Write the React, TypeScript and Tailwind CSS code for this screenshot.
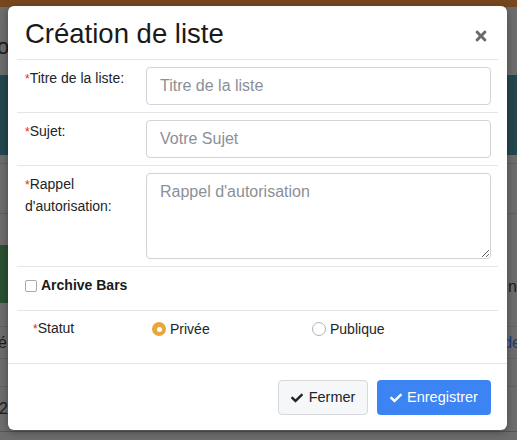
import { FaCheck, FaTimes } from 'react-icons/fa';

function Req() {
  return <span className="text-[12px] text-[#ee1c1c]">*</span>;
}

function FieldRow({ label, children, tall }: { label: React.ReactNode; children: React.ReactNode; tall?: boolean }) {
  return (
    <div className="flex border-b border-[#e6e6e6] py-[7px] pl-2 pr-[7px]">
      <label className={`w-[121px] shrink-0 pt-[1px] text-[14px] leading-[21px] text-[#212529] ${tall ? 'pr-4' : ''}`}>
        {label}
      </label>
      <div className="flex-1">{children}</div>
    </div>
  );
}

function Backdrop() {
  return (
    <div className="flex h-full flex-col bg-[#6d6d6d] text-[#1b1b1b]">
      <div className="h-[7px] bg-[#774820]" />
      <div className="h-[68px] pt-[28px] text-[22px] leading-[24px]">
        <span className="-ml-[3px]">o</span>
      </div>
      <div className="h-[80px] bg-[#23474e]" />
      <div className="h-[9px] border-b border-[#606060]" />
      <div className="h-[50px] border-b border-[#606060]" />
      <div className="h-[31px]" />
      <div className="flex h-[58px] items-start justify-between">
        <div className="h-full w-[20px] bg-[#2b5030]" />
        <div className="pt-[32px] text-[16px] leading-[20px]">n</div>
      </div>
      <div className="h-[24px] border-b border-[#626262]" />
      <div className="flex h-[32px] items-center justify-between border-b border-[#626262] text-[16px]">
        <span className="-ml-[2px]">é</span>
        <span className="-mr-[4px] text-[#1c3a7e]">de</span>
      </div>
      <div className="h-[28px] border-b border-[#626262]" />
      <div className="flex h-[45px] items-center border-b border-[#555] text-[16px]">
        <span className="-ml-[1px]">20</span>
      </div>
      <div className="flex-1" />
    </div>
  );
}

export default function App() {
  return (
    <div className="relative h-[440px] w-[517px] overflow-hidden font-['Liberation_Sans',Arial,sans-serif]">
      <Backdrop />

      <div className="absolute left-[8px] top-[6px] flex h-[424px] w-[499px] flex-col rounded-[6px] bg-white shadow-[0_2px_8px_rgba(0,0,0,0.35)]">
        <div className="px-[9px]">
          <div className="flex items-center justify-between border-b border-[#e6e6e6] pb-[9px] pl-2 pr-[9px] pt-[12px]">
            <h4 className="text-[27.5px] leading-[32px] text-[#1a1a1a]">Création de liste</h4>
            <button className="mt-[4px] text-[#6a6a6a]">
              <FaTimes size={16} />
            </button>
          </div>

          <FieldRow label={<><Req />Titre de la liste:</>}>
            <input
              placeholder="Titre de la liste"
              className="h-[38px] w-full rounded-[4px] border border-[#ced4da] px-[13px] text-[16px] text-[#495057] outline-none placeholder:text-[#8a9097]"
            />
          </FieldRow>

          <FieldRow label={<><Req />Sujet:</>}>
            <input
              placeholder="Votre Sujet"
              className="h-[38px] w-full rounded-[4px] border border-[#ced4da] px-[13px] text-[16px] text-[#495057] outline-none placeholder:text-[#8a9097]"
            />
          </FieldRow>

          <FieldRow tall label={<><Req />Rappel d'autorisation:</>}>
            <textarea
              placeholder="Rappel d'autorisation"
              className="block h-[86px] w-full rounded-[4px] border border-[#ced4da] px-[13px] py-[6px] text-[16px] leading-[24px] text-[#495057] outline-none placeholder:text-[#8a9097]"
            />
          </FieldRow>

          <div className="flex items-center gap-[4px] border-b border-[#e6e6e6] pb-[14px] pl-2 pt-[8px]">
            <span className="h-[12px] w-[12px] rounded-[2px] border border-[#a9a9a9] bg-white" />
            <span className="text-[14px] font-bold leading-[21px] text-[#1a1a1a]">Archive Bars</span>
          </div>

          <div className="flex items-center pb-[23px] pl-4 pt-[7px] text-[14px] leading-[21px] text-[#212529]">
            <span className="w-[119px]">
              <Req />Statut
            </span>
            <span className="flex w-[160px] items-center gap-[4px]">
              <span className="flex h-[14px] w-[14px] items-center justify-center rounded-full bg-[#e6a73c]">
                <span className="h-[5px] w-[5px] rounded-full bg-white" />
              </span>
              Privée
            </span>
            <span className="flex items-center gap-[4px]">
              <span className="h-[14px] w-[14px] rounded-full border border-[#b3b3b3] bg-white" />
              Publique
            </span>
          </div>
        </div>

        <div className="flex justify-end gap-[9px] border-t border-[#e6e6e6] px-4 pt-4">
          <button className="flex h-[35px] w-[90px] items-center justify-center gap-[6px] rounded-[4px] border border-[#d6d8db] bg-[#f6f7f8] text-[14.5px] text-[#212529]">
            <FaCheck size={12} />
            Fermer
          </button>
          <button className="flex h-[35px] w-[114px] items-center justify-center gap-[5px] rounded-[4px] bg-[#3c84f4] text-[14.5px] text-white">
            <FaCheck size={12} />
            Enregistrer
          </button>
        </div>
      </div>
    </div>
  );
}
